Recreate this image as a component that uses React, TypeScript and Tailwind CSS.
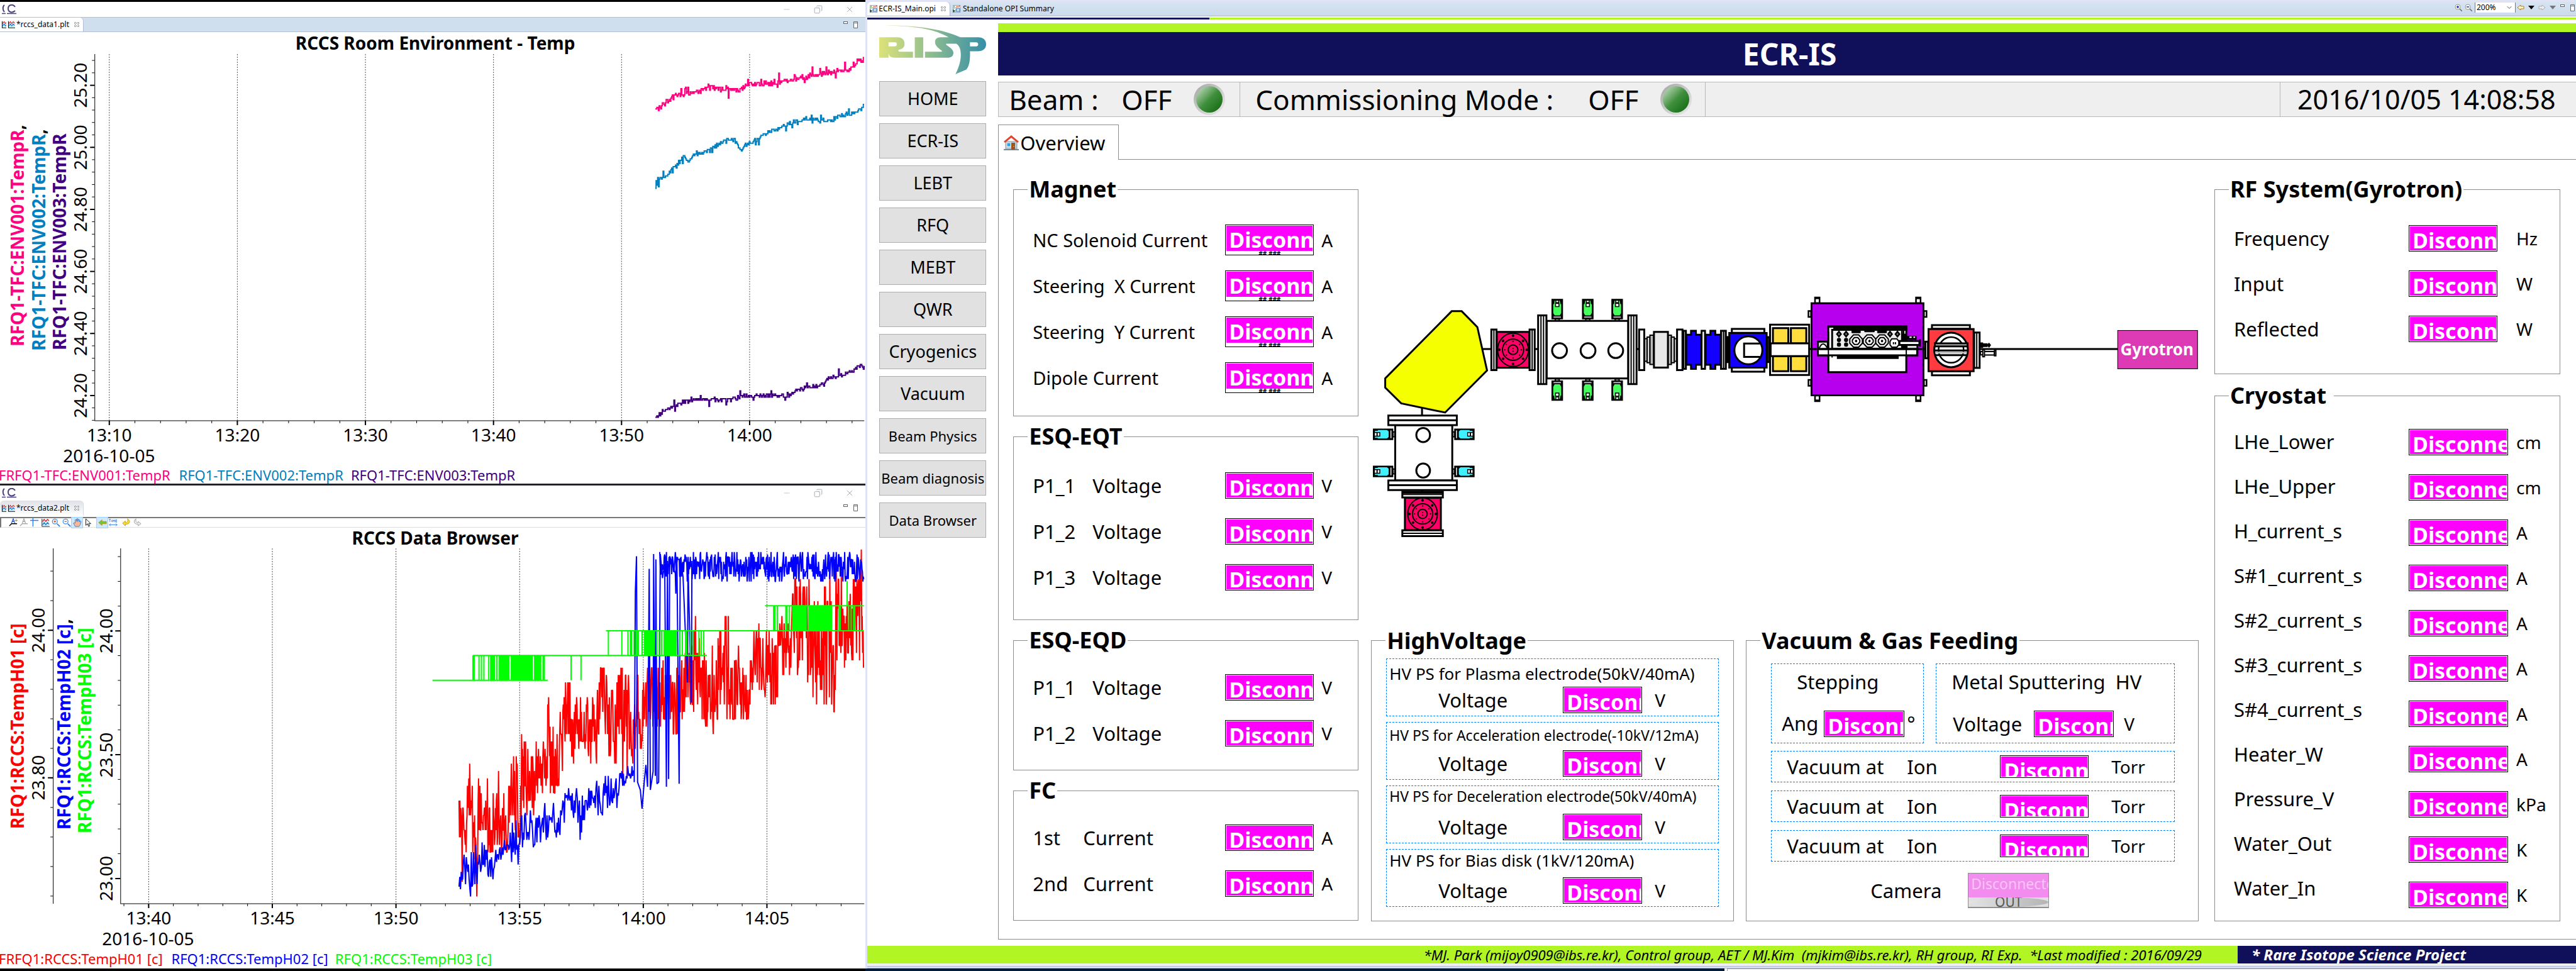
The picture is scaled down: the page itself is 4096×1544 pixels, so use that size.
import React from "react";
import { ChevronDown, Copy, Minus, X } from "lucide-react";

/* ------------------------------------------------------------------ */
/* Trend plots                                                         */
/* ------------------------------------------------------------------ */

type Pt = [number, number];
type Band = [number, number, number];

function rng(seed: number) {
  let s = seed;
  return () => {
    s = (s * 1664525 + 1013904223) % 4294967296;
    return s / 4294967296;
  };
}

const px = (x: number) => Math.round(x * 0.8801 * 10) / 10;
const py = (y: number, top: number) => Math.round((top + y * 0.4945) * 10) / 10;

function lerp(points: number[][], x: number, k: number) {
  for (let i = 1; i < points.length; i++) {
    if (x <= points[i][0]) {
      const a = points[i - 1];
      const b = points[i];
      return a[k] + ((b[k] - a[k]) * (x - a[0])) / (b[0] - a[0]);
    }
  }
  return points[points.length - 1][k];
}

function noisyLine(points: Pt[], noise: number, seed: number) {
  const r = rng(seed);
  const end = points[points.length - 1][0];
  let d = "";
  let spike = 0;
  for (let x = points[0][0]; x <= end; x += 1.4) {
    spike = r() > 0.88 ? (r() - 0.5) * noise * 3 : 0;
    const y = Math.round((lerp(points, x, 1) + (r() - 0.5) * noise + spike) / 5) * 5;
    d += d ? `H${px(x)}V${py(y, 0)}` : `M${px(x)} ${py(y, 0)}`;
  }
  return d;
}

// Random walk between a lower and an upper envelope; `drift` is how far the
// short-term mean may wander away from the middle of the envelope.
function bandLine(band: Band[], quantum: number, density: number, seed: number, drift = 0) {
  const r = rng(seed);
  const end = band[band.length - 1][0];
  let d = "";
  let wander = 0;
  for (let x = band[0][0]; x <= end; x += density) {
    const top = lerp(band, x, 1);
    const bottom = lerp(band, x, 2);
    const mid = (top + bottom) / 2;
    const half = (bottom - top) / 2;
    if (r() > 0.8) wander = (r() * 2 - 1) * drift;
    const reach = r() > 0.8 ? 0.7 + r() * 0.4 : r() * 0.75;
    const raw = wander + (r() > 0.5 ? reach : -reach);
    const y = Math.round((mid + half * Math.max(-1.1, Math.min(1.1, raw))) / quantum) * quantum;
    d += d ? `L${px(x)} ${py(y, 768.3)}` : `M${px(x)} ${py(y, 768.3)}`;
  }
  return d;
}

const env1: Pt[] = [[1182, 345], [1187, 350], [1205, 320], [1225, 305], [1250, 300], [1280, 280], [1300, 285], [1330, 290], [1350, 272], [1380, 268], [1420, 258], [1440, 250], [1460, 245], [1480, 237], [1500, 230], [1530, 222], [1545, 200], [1559, 188]];
const env2: Pt[] = [[1182, 608], [1190, 578], [1200, 565], [1215, 540], [1232, 505], [1242, 520], [1252, 498], [1275, 488], [1290, 468], [1305, 455], [1320, 445], [1328, 455], [1335, 482], [1345, 465], [1365, 448], [1390, 420], [1410, 410], [1430, 392], [1455, 380], [1480, 388], [1500, 386], [1520, 370], [1545, 360], [1559, 340]];
const env3: Pt[] = [[1182, 1342], [1200, 1315], [1220, 1300], [1245, 1285], [1275, 1283], [1310, 1285], [1340, 1272], [1380, 1272], [1425, 1268], [1440, 1250], [1480, 1238], [1495, 1215], [1530, 1200], [1550, 1175], [1559, 1180]];

const redBand: Band[] = [[828, 945, 1135], [835, 1065, 1300], [845, 805, 1135], [850, 970, 1220], [858, 1065, 1350], [868, 805, 1160], [880, 970, 1170], [900, 945, 1180], [915, 875, 1160], [922, 805, 1045], [940, 820, 1155], [950, 840, 1060], [960, 820, 1065], [975, 820, 990], [985, 780, 995], [992, 610, 990], [1005, 755, 970], [1018, 685, 900], [1028, 570, 875], [1035, 690, 945], [1045, 670, 850], [1060, 640, 850], [1072, 690, 945], [1085, 590, 800], [1100, 635, 945], [1115, 640, 870], [1130, 565, 970], [1145, 630, 875], [1160, 620, 850], [1170, 570, 800], [1200, 550, 760], [1220, 570, 805], [1245, 470, 720], [1265, 425, 735], [1290, 550, 805], [1310, 425, 755], [1330, 475, 755], [1350, 560, 755], [1360, 450, 660], [1380, 460, 685], [1395, 450, 705], [1408, 375, 640], [1420, 400, 600], [1440, 290, 610], [1460, 330, 640], [1475, 360, 760], [1490, 340, 740], [1505, 235, 715], [1520, 300, 610], [1535, 290, 640], [1553, 210, 560], [1558, 300, 590]];
const blueRise: Band[] = [[828, 1270, 1325], [838, 1190, 1300], [845, 1220, 1350], [855, 1150, 1290], [872, 1165, 1300], [885, 1170, 1285], [900, 1145, 1225], [912, 1135, 1245], [925, 1080, 1220], [938, 1080, 1230], [945, 1050, 1165], [965, 1010, 1165], [980, 1040, 1175], [995, 1020, 1130], [1007, 1025, 1165], [1015, 980, 1110], [1025, 960, 1060], [1040, 970, 1075], [1048, 1010, 1155], [1060, 990, 1075], [1090, 940, 1055], [1110, 950, 1050], [1125, 925, 1045], [1137, 900, 1000], [1144, 920, 970]];
const bluePlateau: Band[] = [[1190, 225, 300], [1240, 222, 310], [1380, 222, 314], [1558, 222, 314]];
const blueJumps: Pt[] = [[1144, 960], [1146, 350], [1148, 235], [1150, 960], [1155, 985], [1158, 1045], [1162, 960], [1165, 905], [1168, 975], [1171, 275], [1173, 985], [1178, 925], [1179, 228], [1182, 940], [1183, 245], [1185, 965], [1188, 960], [1191, 228], [1195, 305], [1199, 260], [1202, 975], [1204, 250], [1206, 950], [1208, 235], [1218, 290], [1219, 355], [1221, 250], [1225, 965], [1227, 240], [1232, 300], [1240, 640], [1241, 260], [1247, 705], [1248, 250]];

function greenPath() {
  const r = rng(77);
  let d = "";
  const seg = (x1: number, x2: number, y: number) => {
    d += `M${px(x1)} ${py(y, 768.3)}H${px(x2)}`;
  };
  const bars = (x1: number, x2: number, a: number, b: number, p: number) => {
    for (let x = x1; x <= x2; x += 2.2) if (r() < p) d += `M${px(x)} ${py(a, 768.3)}V${py(b, 768.3)}`;
  };
  seg(780, 988, 633);
  seg(853, 1275, 553);
  seg(1093, 1558, 474);
  seg(1380, 1558, 394);
  bars(853, 885, 633, 553, 0.4);
  bars(885, 988, 633, 553, 0.86);
  bars(1030, 1031, 633, 553, 1);
  bars(1048, 1049, 633, 553, 1);
  bars(1093, 1145, 553, 474, 0.4);
  bars(1145, 1232, 553, 474, 0.84);
  bars(1232, 1275, 553, 474, 0.3);
  bars(1380, 1430, 474, 394, 0.25);
  bars(1430, 1500, 474, 394, 0.88);
  bars(1500, 1555, 474, 394, 0.35);
  bars(1528, 1529, 394, 315, 1);
  return d;
}

const range = (n: number) => Array.from({ length: n }, (_, i) => i);

function Vertical({ x, y, children, className }: { x: number; y: number; children: React.ReactNode; className: string }) {
  return (
    <text transform={`translate(${x} ${y}) rotate(-90)`} textAnchor="middle" className={className}>
      {children}
    </text>
  );
}

function EnvironmentPlot() {
  return (
    <svg viewBox="0 51 1374 717" className="block w-full overflow-visible" role="img" aria-label="RCCS Room Environment - Temp">
      <text x="691" y="79" textAnchor="middle" className="text-[28px] font-bold">RCCS Room Environment - Temp</text>
      <path d="M150.5 86V668H1372" fill="none" stroke="#000" />
      {range(6).map((i) => (
        <g key={i}>
          <path d={`M${173.5 + i * 203.3} 86V668`} stroke="#222" strokeDasharray="2 2" strokeWidth="0.8" />
          <path d={`M${173.5 + i * 203.3} 668v7`} stroke="#000" strokeWidth="2" />
          <text x={173.5 + i * 203.3} y="701" textAnchor="middle" className="text-[28px]">
            {["13:10", "13:20", "13:30", "13:40", "13:50", "14:00"][i]}
          </text>
          <Vertical x={138} y={135.5 + i * 98.5} className="text-[28px]">
            {["25.20", "25.00", "24.80", "24.60", "24.40", "24.20"][i]}
          </Vertical>
          <path d={`M150 ${135.5 + i * 98.5}h-7`} stroke="#000" strokeWidth="2" />
        </g>
      ))}
      {range(30).map((i) => (
        <path key={i} d={`M${173.5 + i * 40.66} 668v4`} stroke="#000" />
      ))}
      {range(30).map((i) => (
        <path key={i} d={`M150 ${96 + i * 19.7}h-4`} stroke="#000" />
      ))}
      <text x="100" y="734" className="text-[28px]">2016-10-05</text>
      <Vertical x={38} y={374} className="fill-[#ff0080] text-[28px] font-bold">
        RFQ1-TFC:ENV001:TempR<tspan fill="#000">,</tspan>
      </Vertical>
      <Vertical x={72} y={381} className="fill-[#0080c0] text-[28px] font-bold">
        RFQ1-TFC:ENV002:TempR<tspan fill="#000">,</tspan>
      </Vertical>
      <Vertical x={105} y={384} className="fill-[#400080] text-[28px] font-bold">
        RFQ1-TFC:ENV003:TempR
      </Vertical>
      <path d={noisyLine(env1, 16, 5)} fill="none" stroke="#ff0080" strokeWidth="2" />
      <path d={noisyLine(env2, 13, 9)} fill="none" stroke="#0080c0" strokeWidth="2" />
      <path d={noisyLine(env3, 13, 21)} fill="none" stroke="#400080" strokeWidth="2" />
      <text x="-2" y="763" className="fill-[#ff0080] text-[22px]">FRFQ1-TFC:ENV001:TempR</text>
      <text x="284" y="763" className="fill-[#0080c0] text-[22px]">RFQ1-TFC:ENV002:TempR</text>
      <text x="557" y="763" className="fill-[#400080] text-[22px]">RFQ1-TFC:ENV003:TempR</text>
    </svg>
  );
}

function DataBrowserPlot() {
  return (
    <svg viewBox="0 839 1374 699" className="block w-full overflow-visible" role="img" aria-label="RCCS Data Browser">
      <text x="691" y="866" textAnchor="middle" className="text-[28px] font-bold">RCCS Data Browser</text>
      <path d="M84.5 872V1436M191.5 872V1436H1372" fill="none" stroke="#000" />
      {range(6).map((i) => (
        <g key={i}>
          <path d={`M${236 + i * 196.3} 872V1436`} stroke="#222" strokeDasharray="2 2" strokeWidth="0.8" />
          <path d={`M${236 + i * 196.3} 1436v7`} stroke="#000" strokeWidth="2" />
          <text x={236 + i * 196.3} y="1469" textAnchor="middle" className="text-[28px]">
            {["13:40", "13:45", "13:50", "13:55", "14:00", "14:05"][i]}
          </text>
        </g>
      ))}
      {range(30).map((i) => (
        <path key={i} d={`M${196.7 + i * 39.26} 1436v4`} stroke="#000" />
      ))}
      {range(12).map((i) => (
        <path key={i} d={`M84 ${908 + i * 46.9}h-4`} stroke="#000" />
      ))}
      {range(14).map((i) => (
        <path key={i} d={`M191 ${885 + i * 39.3}h-4`} stroke="#000" />
      ))}
      <path d="M84 1002h-8M84 1236h-8M191 1003h-8M191 1199.500h-8M191 1396h-8" stroke="#000" strokeWidth="2" />
      <Vertical x={71} y={1002} className="text-[28px]">24.00</Vertical>
      <Vertical x={71} y={1236} className="text-[28px]">23.80</Vertical>
      <Vertical x={179} y={1003} className="text-[28px]">24.00</Vertical>
      <Vertical x={179} y={1200} className="text-[28px]">23.50</Vertical>
      <Vertical x={179} y={1396} className="text-[28px]">23.00</Vertical>
      <text x="162" y="1502" className="text-[28px]">2016-10-05</text>
      <Vertical x={38} y={1154} className="fill-[#ff0000] text-[28px] font-bold">RFQ1:RCCS:TempH01 [c]</Vertical>
      <Vertical x={112} y={1151} className="fill-[#0000ff] text-[28px] font-bold">
        RFQ1:RCCS:TempH02 [c]<tspan fill="#000">,</tspan>
      </Vertical>
      <Vertical x={145} y={1161} className="fill-[#00ff00] text-[28px] font-bold">RFQ1:RCCS:TempH03 [c]</Vertical>
      <path d={bandLine(redBand, 23.7, 0.8, 11, 0.5)} fill="none" stroke="#ff0000" strokeWidth="2" strokeLinejoin="bevel" />
      <path d={bandLine(blueRise, 7.9, 1.3, 31, 0.5)} fill="none" stroke="#0000ff" strokeWidth="2" strokeLinejoin="bevel" />
      <path
        d={"M" + blueJumps.map(([x, y]) => `${px(x)} ${py(y, 768.3)}`).join("L")}
        fill="none"
        stroke="#0000ff"
        strokeWidth="2"
        strokeLinejoin="bevel"
      />
      <path d={bandLine(bluePlateau, 7.9, 0.8, 41)} fill="none" stroke="#0000ff" strokeWidth="2" strokeLinejoin="bevel" />
      <path d={greenPath()} fill="none" stroke="#00ff00" strokeWidth="2" />
      <text x="-2" y="1532" className="fill-[#ff0000] text-[22px]">FRFQ1:RCCS:TempH01 [c]</text>
      <text x="272" y="1532" className="fill-[#0000ff] text-[22px]">RFQ1:RCCS:TempH02 [c]</text>
      <text x="532" y="1532" className="fill-[#00ff00] text-[22px]">RFQ1:RCCS:TempH03 [c]</text>
    </svg>
  );
}

/* ------------------------------------------------------------------ */
/* Left windows                                                        */
/* ------------------------------------------------------------------ */

function CcLogo() {
  return (
    <svg viewBox="0 0 26 16" className="h-4 w-[26px]" fill="none" stroke="#4a3f7d" strokeWidth="2">
      <path d="M5 1C2 3 2 9 5 12" />
      <path d="M22 4C19-1 11 0 11 6.500S18 14 22 10" />
      <path d="M1 14.500h6M9 14.500h15" strokeWidth="1.500" />
    </svg>
  );
}

function PlotIcon() {
  return (
    <svg viewBox="0 0 16 16" className="size-3">
      <rect x="2" y="2" width="13" height="12" fill="#c9f3fb" />
      <path d="M2 1v14h14" fill="none" stroke="#111" strokeWidth="1.500" />
      <path d="M3 6l3-4 3 4 3-4 3 3" fill="none" stroke="#e22" strokeWidth="1.500" />
      <path d="M3 11l3-4 3 4 3-4 3 3" fill="none" stroke="#27c" strokeWidth="1.500" />
    </svg>
  );
}

function TabClose() {
  return (
    <svg viewBox="0 0 10 10" className="size-2" fill="#fff" stroke="#666">
      <path d="M1 1h2l2 2 2-2h2v2L7 5l2 2v2H7L5 7 3 9H1V7l2-2-2-2z" />
    </svg>
  );
}

function PaneButtons() {
  return (
    <svg viewBox="0 0 26 14" className="h-3.5 w-[26px]" fill="#fff" stroke="#666">
      <rect x="1.500" y="2.500" width="6" height="3" />
      <path d="M17.500 2.500h6v10h-6zM17.500 4.500h6" />
    </svg>
  );
}

function WindowChrome({ title, active }: { title: string; active: boolean }) {
  return (
    <header>
      <div className="flex h-6 items-center justify-between pl-0.5 pr-[18px]">
        <CcLogo />
        <div className="flex items-center gap-9 text-gray-400">
          <button aria-label="Minimize"><Minus className="size-3.5" strokeWidth={1} /></button>
          <button aria-label="Restore"><Copy className="size-3.5 -scale-x-100" strokeWidth={1.500} /></button>
          <button aria-label="Close"><X className="size-3.5" strokeWidth={1.500} /></button>
        </div>
      </div>
      <div className={active ? "flex h-6 justify-between border-y border-[#b4bfd4] bg-[#d0dfee]" : "flex h-6 justify-between"}>
        <div
          className={
            active
              ? "flex h-full items-center gap-0.5 rounded-tr-md border-r border-[#b4bfd4] bg-white pl-0.5 pr-1.5"
              : "flex h-full items-center gap-0.5 rounded-t-md border-r border-[#d5d8e2] bg-linear-to-b from-[#dfe1e8] to-white pl-0.5 pr-1.5"
          }
        >
          <span className="flex w-2 justify-start overflow-hidden"><span className="shrink-0"><PlotIcon /></span></span>
          <PlotIcon />
          <span className="pr-1.5 text-xs leading-4">{title}</span>
          <TabClose />
        </div>
        <div className="pr-2.5 pt-1"><PaneButtons /></div>
      </div>
    </header>
  );
}

function ToolButton({ label, on, children }: { label: string; on?: boolean; children: React.ReactNode }) {
  return (
    <button
      aria-label={label}
      className={on ? "flex h-4 w-[17px] items-center justify-center bg-[#cce8ff] ring-1 ring-[#99d1ff]" : "flex h-4 w-[17px] items-center justify-center"}
    >
      <svg viewBox="0 0 16 16" className="size-3.5" fill="none">{children}</svg>
    </button>
  );
}

function PlotToolbar() {
  return (
    <div className="mt-0.5 flex h-[17px] items-center border-b border-l-2 border-t-2 border-b-[#ddd] border-l-[#777] border-t-[#777] pl-2.5">
      <ToolButton label="Add annotation">
        <path d="M1 14l4-4h10" stroke="#000" strokeWidth="1.500" />
        <path d="M5 9l3-8 3 8M6 6h4" stroke="#2060d0" strokeWidth="1.500" />
        <path d="M11 4h5M13.500 1.500v5" stroke="#b08020" />
      </ToolButton>
      <ToolButton label="Remove annotation">
        <path d="M1 14l4-4h10M5 9l3-8 3 8M6 6h4" stroke="#aaa" strokeWidth="1.500" />
      </ToolButton>
      <ToolButton label="Crosshair"><path d="M0 4h15M5 0v15" stroke="#2c7be0" strokeWidth="1.500" /></ToolButton>
      <ToolButton label="Autoscale">
        <rect x="2" y="2" width="13" height="12" fill="#c9f3fb" />
        <path d="M2 1v14h14" stroke="#111" />
        <path d="M3 6l3-4 3 4 3-4 3 3" stroke="#e22" strokeWidth="1.500" />
        <path d="M3 12l3-4 3 4 3-4 3 3" stroke="#27c" strokeWidth="1.500" />
      </ToolButton>
      <ToolButton label="Zoom in">
        <circle cx="6" cy="6" r="4.500" stroke="#4a90e2" strokeWidth="1.500" />
        <path d="M4 6h4M6 4v4" stroke="#e52" strokeWidth="1.500" />
        <path d="M10 10l5 5" stroke="#2c7be0" strokeWidth="2" />
      </ToolButton>
      <ToolButton label="Zoom out">
        <circle cx="6" cy="6" r="4.500" stroke="#4a90e2" strokeWidth="1.500" />
        <path d="M4 6h4" stroke="#e52" strokeWidth="1.500" />
        <path d="M10 10l5 5" stroke="#2c7be0" strokeWidth="2" />
      </ToolButton>
      <ToolButton label="Pan" on>
        <path d="M4 15L1 9l2-1 1 1V3l2-1 1 4V1h2v5l1-4 2 1v4l1-2 2 1-2 6-2 3z" fill="#fbb890" stroke="#2c7be0" />
      </ToolButton>
      <ToolButton label="Select"><path d="M4 1v12l3-3 2 5 2-1-2-4h4z" fill="#fff" stroke="#000" /></ToolButton>
      <span className="w-1.5" />
      <ToolButton label="Back to now" on><path d="M1 8l6-5v3h8v4H7v3z" fill="#6c3" stroke="#c80" /></ToolButton>
      <button aria-label="Time" className="flex h-4 w-[17px] flex-col items-center justify-center">
        <svg viewBox="0 0 16 16" className="size-3.5" fill="none" stroke="#2c7be0">
          <path d="M0 2h4M2 2v5M5.500 3v4M7.500 7V3l1.500 2 1.500-2v4M15 7h-2.500V3H15M12.500 5H15" />
          <path d="M1 12h14M3.500 9.500L1 12l2.500 2.500M12.500 9.500L15 12l-2.500 2.500" />
        </svg>
      </button>
      <span className="w-1" />
      <ToolButton label="Undo"><path d="M1 9l5-4v3c4 0 5-2 4-7 5 3 6 10-4 10v3z" fill="#fd3" stroke="#b90" /></ToolButton>
      <ToolButton label="Redo"><path d="M15 10l-5-4v2C6 8 5 6 6 1c-5 3-5 10 4 10v3z" fill="#eee" stroke="#999" /></ToolButton>
    </div>
  );
}

/* ------------------------------------------------------------------ */
/* Value read-outs and groups                                          */
/* ------------------------------------------------------------------ */

function Readout({ name, size = "w-[141px] h-[42px]", placeholder }: { name: string; size?: string; placeholder?: boolean }) {
  return (
    <output aria-label={name} className={`relative block shrink-0 overflow-hidden border border-black bg-white p-px ${size}`}>
      <span className={placeholder ? "block h-10 overflow-hidden bg-[#ff00ff]" : "block h-full overflow-hidden bg-[#ff00ff]"}>
        <span className="block pl-1 text-[34px] font-bold leading-[44px] text-white">Disconnected</span>
      </span>
      {placeholder && <span className="block text-center text-[10px] font-bold leading-2">##.###</span>}
    </output>
  );
}

function Group({ title, className = "", body, children }: { title: string; className?: string; body: string; children: React.ReactNode }) {
  return (
    <fieldset className={`border border-[#8c8c8c] ${className}`}>
      <legend className="ml-[22px] whitespace-pre px-0.5 text-4xl font-bold leading-[48px]">{title}</legend>
      <div className={body}>{children}</div>
    </fieldset>
  );
}

function MagnetGroup() {
  return (
    <Group title="Magnet" body="flex flex-col gap-6 pb-9 pl-[30px] pt-8">
      {["NC Solenoid Current", "Steering  X Current", "Steering  Y Current", "Dipole Current"].map((n) => (
        <div key={n} className="flex items-center">
          <span className="w-[306px] whitespace-pre text-[29px] leading-9">{n}</span>
          <Readout name={n} size="w-[141px] h-[49px]" placeholder />
          <span className="pl-3 text-[28px] leading-9">A</span>
        </div>
      ))}
    </Group>
  );
}

function ChannelGroup({ title, rows, kind, unit, body }: { title: string; rows: string[]; kind: string; unit: string; body: string }) {
  return (
    <Group title={title} body={`flex flex-col gap-[31px] pl-[30px] ${body}`}>
      {rows.map((n) => (
        <div key={n} className="flex items-center text-[31px] leading-10">
          <span className={kind === "Voltage" ? "w-[95px]" : "w-20"}>{n}</span>
          <span className={kind === "Voltage" ? "w-[211px]" : "w-[226px]"}>{kind}</span>
          <Readout name={`${title} ${n} ${kind}`} />
          <span className="pl-3 text-[28px] leading-9">{unit}</span>
        </div>
      ))}
    </Group>
  );
}

function HighVoltageGroup() {
  const supplies = [
    { t: "HV PS for Plasma electrode(50kV/40mA)", c: "text-[26px] pt-1" },
    { t: "HV PS for Acceleration electrode(-10kV/12mA)", c: "text-[23px] pb-1" },
    { t: "HV PS for Deceleration electrode(50kV/40mA)", c: "text-[23px] pb-3" },
    { t: "HV PS for Bias disk (1kV/120mA)", c: "text-[26px] pb-2" },
  ];
  return (
    <Group title="HighVoltage" className="w-[577px]" body="flex flex-col gap-[9px] px-[23px] pb-5 pt-1">
      {supplies.map(({ t, c }) => (
        <section key={t} className="h-[92px] border border-dashed border-[#0080ff]">
          <h3 className={`flex h-[44px] items-center whitespace-nowrap pl-1 ${c}`}>{t}</h3>
          <div className="flex items-center pl-[82px] text-[31px] leading-10">
            <span className="w-[198px]">Voltage</span>
            <Readout name={t} size="w-[126px] h-[42px]" />
            <span className="pl-5 text-[28px] leading-9">V</span>
          </div>
        </section>
      ))}
    </Group>
  );
}

function VacuumGroup() {
  return (
    <Group title="Vacuum &amp; Gas Feeding" className="flex-1" body="flex flex-col pb-5 pl-[39px] pr-[37px] pt-3 text-[31px] leading-10">
      <div className="flex h-[127px] gap-[19px]">
        <section className="w-[243px] border border-dashed border-[#0080ff] pt-2">
          <h3 className="pl-10">Stepping</h3>
          <div className="flex items-start pl-4 pt-[26px]">
            <span className="w-[67px]">Ang</span>
            <Readout name="Stepping angle" size="w-[128px] h-[42px]" />
            <span className="pl-1">°</span>
          </div>
        </section>
        <section className="flex-1 border border-dashed border-[#0080ff] pt-2">
          <h3 className="whitespace-pre pl-6">Metal Sputtering  HV</h3>
          <div className="flex items-center pl-[26px] pt-[26px]">
            <span className="w-[129px]">Voltage</span>
            <Readout name="Metal sputtering voltage" size="w-[127px] h-[42px]" />
            <span className="pl-4 text-[28px]">V</span>
          </div>
        </section>
      </div>
      <div className="flex flex-col gap-[13px] pt-3">
        {[1, 2, 3].map((i) => (
          <div key={i} className="flex h-[50px] items-center border border-dashed border-[#0080ff] pl-6">
            <span className="w-[191px]">Vacuum at</span>
            <span className="w-[148px]">Ion</span>
            <Readout name={`Vacuum ${i}`} size="w-[141px] h-[36px]" />
            <span className="pl-9 text-[28px]">Torr</span>
          </div>
        ))}
      </div>
      <div className="flex items-center pl-[158px] pt-[18px]">
        <span className="w-[155px]">Camera</span>
        <button className="flex h-14 w-[129px] flex-col overflow-hidden border border-b-2 border-[#8f8f8f] bg-[#dfdfdf] text-left">
          <span className="h-[38px] w-full shrink-0 bg-[#f28cee] pl-1 text-[23px] leading-8 text-[#f7c6f5]">Disconnected</span>
          <span className="flex h-4 w-full items-center justify-center overflow-hidden rounded-[50%] bg-linear-to-r from-[#e4e4e4] to-[#b4b4b4] text-[21px] leading-4 text-[#555]">
            OUT
          </span>
        </button>
      </div>
    </Group>
  );
}

function GyrotronGroup() {
  const rows = [["Frequency", "Hz"], ["Input", "W"], ["Reflected", "W"]];
  return (
    <Group title="RF System(Gyrotron)" body="flex flex-col gap-[30px] pb-[50px] pl-[30px] pt-[33px]">
      {rows.map(([n, u]) => (
        <div key={n} className="flex items-center">
          <span className="w-[278px] text-[31px] leading-10">{n}</span>
          <Readout name={n} />
          <span className="pl-[30px] text-[28px] leading-9">{u}</span>
        </div>
      ))}
    </Group>
  );
}

function CryostatGroup() {
  const rows = [
    ["LHe_Lower", "cm"], ["LHe_Upper", "cm"], ["H_current_s", "A"], ["S#1_current_s", "A"], ["S#2_current_s", "A"], ["S#3_current_s", "A"],
    ["S#4_current_s", "A"], ["Heater_W", "A"], ["Pressure_V", "kPa"], ["Water_Out", "K"], ["Water_In", "K"],
  ];
  return (
    <Group title="Cryostat " className="flex-1" body="flex pl-[30px] pt-[14px]">
      <div className="w-[278px]">
        {rows.map(([n]) => (
          <div key={n} className="h-[71px] text-[31px] leading-[71px]">{n}</div>
        ))}
      </div>
      <div>
        {rows.map(([n, u]) => (
          <div key={n} className="flex h-[72px] items-center">
            <Readout name={n} size="w-[158px] h-[42px]" />
            <span className="pl-[13px] text-[28px] leading-9">{u}</span>
          </div>
        ))}
      </div>
    </Group>
  );
}

/* ------------------------------------------------------------------ */
/* Beam line drawing                                                   */
/* ------------------------------------------------------------------ */

function B({ x, y, w, h, f = "#fff" }: { x: number; y: number; w: number; h: number; f?: string }) {
  return <rect x={x} y={y} width={w} height={h} fill={f} />;
}

function Cup({ cx, cy, k = 1 }: { cx: number; cy: number; k?: number }) {
  const outer = [[0, -80], [0, 80], [-48, 0], [48, 0], [-35, -50], [35, -50], [-35, 51], [35, 51]];
  const inner = [[0, -47], [0, 47], [-29, 0], [29, 0], [-23, -30], [23, -30], [-23, 30], [23, 30], [0, -8], [0, 8]];
  return (
    <g transform={`translate(${cx} ${cy})`} fill="none">
      <ellipse rx={54 * k} ry={94 * k} strokeWidth="2" />
      <ellipse rx={37 * k} ry={60 * k} strokeWidth="2" />
      <ellipse rx={17 * k} ry={27 * k} strokeWidth="2" />
      {outer.map(([x, y], i) => <ellipse key={i} cx={x * k} cy={y * k} rx="3.500" ry="6" fill="#000" strokeWidth="1" />)}
      {inner.map(([x, y], i) => <ellipse key={i} cx={x * k} cy={y * k} rx="2" ry="3" fill="#000" strokeWidth="0.500" />)}
    </g>
  );
}

function GreenPump({ x, flip }: { x: number; flip?: boolean }) {
  return (
    <g transform={flip ? `translate(${x} 921) scale(1 -1)` : `translate(${x} 0)`}>
      <rect x="-7" y="284" width="14" height="12" fill="#999" strokeWidth="2" />
      <rect x="-18" y="176" width="36" height="108" fill="#000" strokeWidth="2" />
      <path d="M-9 182h18l2 20 3 0v50l-5 14h-18l-5-14v-50h3z" fill="#44ff5c" stroke="none" />
      <rect x="-5" y="180" width="10" height="14" fill="#fff" strokeWidth="1.500" />
      <rect x="-6" y="198" width="12" height="18" fill="#fff" strokeWidth="1.500" />
      <rect x="-13" y="272" width="26" height="7" fill="#bbb" stroke="none" />
    </g>
  );
}

function CyanPump({ y, flip }: { y: number; flip?: boolean }) {
  return (
    <g transform={flip ? `translate(478 ${y}) scale(-1 1)` : `translate(0 ${y})`}>
      <rect x="130" y="-14" width="8" height="28" fill="#999" strokeWidth="2" />
      <rect x="63" y="-29" width="67" height="58" fill="#000" strokeWidth="2" />
      <path d="M68-20h10v-4h32l6 8v32l-6 8H78v-4H68z" fill="#40f0ff" stroke="none" />
      <rect x="66" y="-10" width="9" height="20" fill="#fff" strokeWidth="1.500" />
      <rect x="76" y="-10" width="9" height="20" fill="#fff" strokeWidth="1.500" />
      <rect x="122" y="-22" width="4" height="44" fill="#ccc" stroke="none" />
    </g>
  );
}

function BeamLine() {
  return (
    <svg viewBox="2180 277 1316 718" className="block w-full" role="img" aria-label="Beam line layout">
      <g
        transform="matrix(.4537 0 0 .2813 2155.4 426.8)"
        stroke="#000"
        strokeWidth="3"
        className="[&_*]:[vector-effect:non-scaling-stroke]"
      >
        <path d="M440 456H1000M233 780V1270" />
        <path d="M337 242H372L427 332L461 577L314 815L160 763L104 674V622Z" fill="#f6ff00" />
        <B x={476} y={346} w={18} h={229} /><path d="M485 346V575" strokeWidth="2" />
        <B x={610} y={346} w={18} h={229} /><path d="M619 346V575" strokeWidth="2" />
        <B x={495} y={359} w={114} h={203} f="#ff0066" />
        <Cup cx={552} cy={460} />
        <B x={670} y={297} w={286} h={325} />
        <B x={640} y={266} w={29} h={388} /><path d="M650 266V654M659 266V654" strokeWidth="2" />
        <B x={956} y={266} w={29} h={388} /><path d="M966 266V654M975 266V654" strokeWidth="2" />
        {[715, 815, 912].map((x) => <ellipse key={x} cx={x} cy="465" rx="26" ry="42" fill="#fff" />)}
        {[707, 814, 917].map((x) => <g key={x}><GreenPump x={x} /><GreenPump x={x} flip /></g>)}
        <B x={994} y={346} w={18} h={229} />
        <g strokeWidth="2">
          <B x={1013} y={397} w={9} h={128} f="#bbb" />
          <B x={1022} y={388} w={10} h={145} f="#ddd" />
          <B x={1032} y={378} w={13} h={165} f="#bbb" />
          <B x={1095} y={378} w={12} h={165} f="#bbb" />
          <B x={1107} y={388} w={10} h={145} f="#ddd" />
          <B x={1117} y={397} w={9} h={128} f="#bbb" />
        </g>
        <B x={1046} y={359} w={49} h={202} f="#e8e8e8" />
        <B x={1127} y={346} w={19} h={229} />
        <B x={1149} y={353} w={9} h={215} f="#bbb" />
        <path d="M1159 375H1176V353H1193V375H1212V545H1193V568H1176V545H1159Z" fill="#1400ff" />
        <path d="M1227 375H1244V353H1261V375H1280V545H1261V568H1244V545H1227Z" fill="#1400ff" />
        <B x={1213} y={353} w={12} h={215} />
        <B x={1281} y={353} w={17} h={215} f="#ccc" /><path d="M1290 353V568" strokeWidth="2" />
        <B x={1302} y={388} w={6} h={142} />
        <B x={1442} y={388} w={7} h={142} />
        <B x={1319} y={342} w={114} h={22} />
        <B x={1319} y={561} w={114} h={23} />
        <B x={1310} y={365} w={131} h={196} f="#1400ff" />
        <ellipse cx="1377" cy="463" rx="49" ry="79" fill="#fff" />
        <path d="M1418 425H1362V500H1418" fill="none" />
        <B x={1453} y={318} w={137} h={285} />
        {[1463, 1526].map((x) => (
          <g key={x}>
            <B x={x} y={338} w={54} h={86} f="#ffdd3c" />
            <B x={x} y={496} w={54} h={85} f="#ffdd3c" />
          </g>
        ))}
        <B x={1455} y={424} w={135} h={72} />
        <B x={139} y={886} w={200} h={313} />
        <B x={115} y={832} w={240} h={54} /><path d="M115 859H355" />
        <B x={115} y={1199} w={240} h={54} /><path d="M115 1226H355" />
        <ellipse cx="237" cy="942" rx="24" ry="40" fill="#fff" />
        <ellipse cx="237" cy="1143" rx="24" ry="40" fill="#fff" />
        {[938, 1148].map((y) => <g key={y}><CyanPump y={y} /><CyanPump y={y} flip /></g>)}
        <B x={173} y={1297} w={126} h={183} f="#ff0066" />
        <B x={164} y={1263} w={142} h={32} /><path d="M164 1270H306M164 1278H306" strokeWidth="2" />
        <B x={164} y={1481} w={142} h={33} /><path d="M164 1498H306" strokeWidth="2" />
        <Cup cx={235} cy={1388} k={0.96} />
      </g>
      <g
        transform="matrix(.4537 0 0 .2371 2831.2 426.8)"
        stroke="#000"
        strokeWidth="3"
        className="[&_*]:[vector-effect:non-scaling-stroke]"
      >
        <g strokeWidth="2.500">
          {[121, 475].map((x) => (
            <g key={x}>
              <B x={x} y={195} w={16} h={38} /><path d={`M${x} 201h16`} />
              <B x={x} y={853} w={16} h={38} /><path d={`M${x} 885h16`} />
            </g>
          ))}
          {[98, 503].map((x) => <g key={x}><B x={x} y={286} w={9} h={40} /><B x={x} y={748} w={9} h={40} /></g>)}
        </g>
        <B x={109} y={234} w={392} h={617} f="#b700ee" />
        <B x={168} y={389} w={273} h={307} />
        <path d="M168 389H441V412H168Z" fill="#000" />
        <rect x="171" y="398" width="14" height="26" fill="#fff" stroke="none" />
        <path d="M181 412V598M432 412V540" strokeWidth="2" />
        <B x={181} y={412} w={245} h={128} f="#eee" />
        <path d="M250 412h30v20h-30zM295 412h34v14h-34zM340 412h32v20h-32z" fill="#000" strokeWidth="1" />
        {[265, 312, 356].map((x) => (
          <g key={x}>
            <path d={`M${x - 9} 446h18l13 28v28l-13 26h-18l-13-26v-28z`} fill="#fff" strokeWidth="2" />
            <path d={`M${x - 6} 464h12l7 16v14l-7 16h-12l-7-16v-14z`} fill="#fff" strokeWidth="2" />
            <ellipse cx={x} cy="487" rx="3" ry="7" strokeWidth="1" />
          </g>
        ))}
        {[205, 230, 384, 410].map((x) => <path key={x} d={`M${x} 424l7 17-7 17-7-17z`} fill="#777" strokeWidth="2.500" />)}
        {[205, 230].map((x) => <g key={x}><ellipse cx={x} cy="480" rx="4" ry="8" /><ellipse cx={x} cy="511" rx="4" ry="8" /></g>)}
        <path d="M428 440h14v100h-14zM442 456h34v22h-34z" fill="#000" strokeWidth="1" />
        <path d="M452 462h8M466 462h6" stroke="#fff" strokeWidth="2" />
        <B x={131} y={491} w={35} h={92} f="#ddd" />
        <path d="M136 535Q149 480 164 535" fill="#fff" strokeWidth="2" />
        <B x={442} y={500} w={38} h={83} f="#ddd" />
        <B x={131} y={541} w={348} h={42} />
        <path d="M168 541V583M441 541V583" strokeWidth="2" />
        <B x={201} y={588} w={210} h={13} f="#bbb" />
        <path d="M390 472h18l7 18v22l-7 16h-18l-6-16v-22z" fill="#fff" strokeWidth="2" />
        <path d="M396 495v14M403 495v14M392 532h16" strokeWidth="2" />
        <B x={417} y={487} w={70} h={27} />
        <path d="M489 475V525" />
        <path d="M100 541H520M690 541H1182" />
        <B x={508} y={491} w={9} h={112} />
        <B x={531} y={381} w={133} h={24} />
        <B x={531} y={690} w={133} h={27} />
        <B x={519} y={407} w={158} h={283} f="#ff3b40" />
        <B x={679} y={430} w={19} h={238} /><path d="M688 430V668" strokeWidth="2" />
        <ellipse cx="598" cy="547" rx="59" ry="116" fill="#fff" />
        <ellipse cx="598" cy="547" rx="44" ry="86" fill="#fff" strokeWidth="2.500" />
        <B x={541} y={503} w={115} h={20} f="#bbb" />
        <path d="M539 550H657M541 582H655" />
        <path d="M543 565H653" stroke="#bbb" />
        <B x={701} y={503} w={6} h={24} /><B x={707} y={509} w={16} h={12} />
        <path d="M731 500l6 15-6 15-6-15z" fill="#000" strokeWidth="1" />
        <g strokeWidth="2"><B x={701} y={558} w={10} h={22} /><B x={712} y={558} w={38} h={23} /><B x={709} y={545} w={6} h={48} /><B x={750} y={550} w={5} h={36} /></g>
      </g>
      <rect x="3367.500" y="525.500" width="127" height="61" fill="#dd3ab5" stroke="#000" />
      <text x="3430" y="565" textAnchor="middle" className="fill-white text-[26px] font-bold">Gyrotron</text>
    </svg>
  );
}

/* ------------------------------------------------------------------ */
/* Main window                                                         */
/* ------------------------------------------------------------------ */

function RispLogo() {
  return (
    <svg viewBox="105 166 722 332" className="block w-full" role="img" aria-label="RISP">
      <defs>
        <linearGradient id="risp" gradientUnits="userSpaceOnUse" x1="105" y1="300" x2="827" y2="340">
          <stop offset="0" stopColor="#dde27a" />
          <stop offset="0.400" stopColor="#9cc48c" />
          <stop offset="0.700" stopColor="#68a89a" />
          <stop offset="1" stopColor="#348fa8" />
        </linearGradient>
      </defs>
      <g fill="url(#risp)" fillRule="evenodd">
        <path d="M105 248H226C262 248 276 268 276 292C276 316 262 326 238 332C230 336 234 345 244 345H333V386H206C178 386 168 370 168 350V386H105ZM168 282V309H212C228 309 228 282 212 282Z" />
        <path d="M345 248H402V386H345Z" />
        <path d="M130 168C380 166 540 196 652 248H772C808 248 827 268 827 294C827 324 806 342 772 342H718C720 400 714 440 694 466L620 497C654 430 660 380 654 340C650 314 640 300 626 291H562C552 292 556 298 562 302C592 322 606 336 606 354C606 376 590 386 566 386H414V345H524C532 344 530 340 524 336C496 316 482 300 482 280C482 260 496 248 520 248H574C480 196 380 172 130 168ZM718 282V309H760C778 309 778 282 760 282Z" />
      </g>
    </svg>
  );
}

function OpiIcon() {
  return (
    <svg viewBox="0 0 16 16" className="size-3">
      <rect x="1" y="0.500" width="14.500" height="15" fill="#f4f8fa" stroke="#889" />
      <path d="M2 3h2M2 6h2" stroke="#2b3" strokeWidth="2" />
      <path d="M6 6l3-3 2 2 4-4" fill="none" stroke="#e63" strokeWidth="1.500" />
      <rect x="7" y="8" width="8" height="5" fill="#fff" stroke="#26c" strokeWidth="1.500" />
      <path d="M0 9l6 3.500L0 16z" fill="#264" />
    </svg>
  );
}

function HouseIcon() {
  return (
    <svg viewBox="0 0 24 24" className="size-6">
      <path d="M3 10h18v12H3z" fill="#c3cfd6" stroke="#8898a2" />
      <path d="M0 22h24v2H0z" fill="#7b8a93" />
      <path d="M0 10L12 0l12 10-2 2L12 4 2 12z" fill="#e0442a" />
      <rect x="5" y="12" width="6" height="6" fill="#2ba3e0" stroke="#e8f4fa" />
      <path d="M12 12h6v11h-6z" fill="#9a5522" />
      <path d="M16 17v1.500" stroke="#fc6" />
    </svg>
  );
}

function Lamp() {
  return (
    <span className="block size-[50px] rounded-full bg-linear-to-br from-[#a6a6a6] to-[#ededed] p-1">
      <span className="block size-full rounded-full bg-linear-to-br from-[#cfe6cf] via-[#3f8f3c] to-[#056605]" />
    </span>
  );
}

function EditorTabs() {
  return (
    <div className="flex h-[23px] items-stretch justify-between border-b border-[#aab4cf] bg-linear-to-b from-[#d6e4f2] to-[#cbdbeb]">
      <div className="flex text-xs leading-4">
        <div className="flex items-center gap-0.5 rounded-t-md border-r border-[#aab4cf] bg-white pl-1 pr-1.5">
          <OpiIcon /><span>ECR-IS_Main.opi</span><span className="pl-1.5"><TabClose /></span>
        </div>
        <div className="flex items-center gap-1 pl-1"><OpiIcon /><span>Standalone OPI Summary</span></div>
      </div>
      <div className="flex items-center pb-1">
        <button aria-label="Zoom in" className="mr-1">
          <svg viewBox="0 0 12 12" className="size-3" fill="none"><circle cx="5" cy="5" r="4" fill="#fff" stroke="#998" /><path d="M3 5h4M5 3v4" stroke="#23b" strokeWidth="1.500" /><path d="M8 8l4 4" stroke="#765" strokeWidth="1.500" /></svg>
        </button>
        <button aria-label="Zoom out" className="mr-1">
          <svg viewBox="0 0 12 12" className="size-3" fill="none"><circle cx="5" cy="5" r="4" fill="#fff" stroke="#998" /><path d="M3 5h4" stroke="#23b" strokeWidth="1.500" /><path d="M8 8l4 4" stroke="#765" strokeWidth="1.500" /></svg>
        </button>
        <span className="relative mr-0.5 block h-4">
          <select aria-label="Zoom level" className="block h-4 w-[65px] appearance-none border-x border-[#777] bg-white pl-0.5 text-xs leading-4">
            <option>200%</option>
          </select>
          <ChevronDown className="pointer-events-none absolute right-1 top-0.5 size-3 text-gray-600" />
        </span>
        <button aria-label="Back" className="mr-1.5"><svg viewBox="0 0 12 10" className="h-2.5 w-3"><path d="M1 5l5-4v2h5v4H6v2z" fill="#fff6d0" stroke="#b77a1a" /></svg></button>
        <button aria-label="Back history" className="mr-1.5"><svg viewBox="0 0 10 6" className="h-1.5 w-2.5"><path d="M0 0h10L5 6z" fill="#000" /></svg></button>
        <button aria-label="Forward" className="mr-1.5"><svg viewBox="0 0 12 10" className="h-2.5 w-3"><path d="M11 5L6 1v2H1v4h5v2z" fill="#eee" stroke="#aaa" /></svg></button>
        <button aria-label="Forward history" className="mr-1.5"><svg viewBox="0 0 10 6" className="h-1.5 w-2.5"><path d="M0 0h10L5 6z" fill="#777" /></svg></button>
        <PaneButtons />
      </div>
    </div>
  );
}

const nav = [
  ["HOME", "text-[27px]"], ["ECR-IS", "text-[27px]"], ["LEBT", "text-[27px]"], ["RFQ", "text-[27px]"], ["MEBT", "text-[27px]"], ["QWR", "text-[27px]"],
  ["Cryogenics", "text-[27px]"], ["Vacuum", "text-[27px]"], ["Beam Physics", "text-[22px]"], ["Beam diagnosis", "text-[22px]"], ["Data Browser", "text-[22px]"],
];

export default function App() {
  return (
    <div className="flex min-h-screen flex-col overflow-hidden bg-white font-['Noto_Sans',sans-serif] text-black">
      <div className="flex flex-1">
        <aside className="w-[33.6%] shrink-0">
          <section className="border-t-[3px] border-black">
            <WindowChrome title="*rccs_data1.plt" active />
            <EnvironmentPlot />
          </section>
          <section className="border-t-[3px] border-[#22222a]">
            <WindowChrome title="*rccs_data2.plt" active={false} />
            <PlotToolbar />
            <DataBrowserPlot />
          </section>
        </aside>

        <section className="flex min-w-0 flex-1 flex-col border-l-[3px] border-t-[3px] border-[#dfe3f4]">
          <EditorTabs />
          <div className="mt-0.5 flex h-[3px] bg-[#b1f525]"><div className="w-1/5 bg-[#100f59]" /></div>

          <div className="flex flex-1">
            <nav className="flex w-[208px] shrink-0 flex-col gap-[11px] px-[19px] pt-[9px]">
              <RispLogo />
              {nav.map(([label, size]) => (
                <button key={label} className={`h-14 whitespace-nowrap border border-[#adadad] bg-[#e1e1e1] leading-9 ${size}`}>
                  {label}
                </button>
              ))}
            </nav>

            <main className="flex min-w-0 flex-1 flex-col pt-1.5">
              <div className="h-3.5 bg-[#b1f525]" />
              <h1 className="bg-[#100f59] pl-2 text-center text-5xl font-bold leading-[69px] text-white">ECR-IS</h1>
              <div className="mt-2.5 flex h-14 items-center border-y border-l border-[#b9b9b9] bg-[#efefef] text-[44px] leading-[54px]">
                <div className="flex w-[384px] items-center border-r border-[#b9b9b9] pl-4">
                  <span className="w-[179px]">Beam :</span>
                  <span className="w-[115px]">OFF</span>
                  <Lamp />
                </div>
                <div className="flex w-[740px] items-center border-r border-[#b9b9b9] pl-6">
                  <span className="w-[529px]">Commissioning Mode :</span>
                  <span className="w-[115px]">OFF</span>
                  <Lamp />
                </div>
                <div className="flex-1" />
                <time className="w-[471px] border-l border-[#b9b9b9] pl-[27px] text-[43px]">2016/10/05 14:08:58</time>
              </div>

              <div className="mt-3 flex h-14" role="tablist">
                <button role="tab" aria-selected="true" className="flex w-[192px] items-center gap-0.5 border border-b-0 border-[#8c8c8c] pl-2 text-[31px] leading-10">
                  <HouseIcon />Overview
                </button>
                <div className="flex-1 border-b border-[#8c8c8c]" />
              </div>

              <div className="flex flex-1 border-b border-l border-[#8c8c8c] pb-7 pl-[23px] pr-[25px] pt-[23px]">
                <div className="flex w-[549px] shrink-0 flex-col gap-2">
                  <MagnetGroup />
                  <ChannelGroup title="ESQ-EQT" rows={["P1_1", "P1_2", "P1_3"]} kind="Voltage" unit="V" body="pb-[46px] pt-[33px]" />
                  <ChannelGroup title="ESQ-EQD" rows={["P1_1", "P1_2"]} kind="Voltage" unit="V" body="pb-[37px] pt-[30px]" />
                  <ChannelGroup title="FC" rows={["1st", "2nd"]} kind="Current" unit="A" body="pb-[37px] pt-[30px]" />
                </div>
                <div className="ml-5 mr-[25px] flex min-w-0 flex-1 flex-col justify-between">
                  <BeamLine />
                  <div className="flex gap-[19px]">
                    <HighVoltageGroup />
                    <VacuumGroup />
                  </div>
                </div>
                <div className="flex w-[550px] shrink-0 flex-col gap-2.5">
                  <GyrotronGroup />
                  <CryostatGroup />
                </div>
              </div>
            </main>
          </div>

          <footer className="mt-2.5 flex bg-[#b1f525] text-[22px] italic leading-7">
            <p className="flex-1 whitespace-pre pr-[57px] text-right">
              {"*MJ. Park (mijoy0909@ibs.re.kr), Control group, AET / MJ.Kim  (mjkim@ibs.re.kr), RH group, RI Exp.  *Last modified : 2016/09/29"}
            </p>
            <p className="w-[538px] bg-[#100f59] pl-[22px] text-2xl font-bold leading-7 text-white">* Rare Isotope Science Project</p>
          </footer>
          <div className="h-1 bg-[#efefef]" />
          <div className="h-1 border-y border-[#aab4cf] bg-[#dfe3f4]" />
        </section>
      </div>
      <div className="flex h-[5px]">
        <div className="w-[33.6%] bg-black" />
        <div className="w-1/3 bg-[#001b38]" />
        <div className="ml-1 flex-1 border-l border-t border-gray-400 bg-white" />
      </div>
    </div>
  );
}
